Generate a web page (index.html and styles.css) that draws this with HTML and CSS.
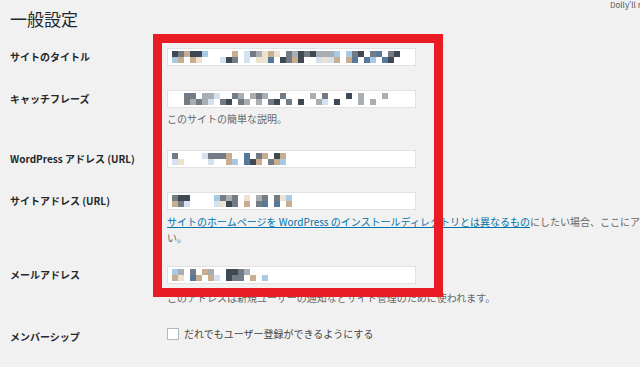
FILE: index.html
```html
<!DOCTYPE html>
<html lang="ja">
<head>
    <meta charset="UTF-8">
    <meta name="viewport" content="width=device-width, initial-scale=1.0">
    <title>一般設定</title>
    <link rel="stylesheet" href="styles.css">
</head>
<body>
    <p class="dolly">Dolly'll never go away again</p>

    <div class="wrap">
        <h1>一般設定</h1>

        <div class="form">
            <div class="row">
                <div class="label">サイトのタイトル</div>
                <div class="field">
                    <div class="input"><div class="mosaic" data-top="kdtkkb....t.ldgctc.dgkdkgggb.bdk.ds.dk" data-bot="bt.tc...lkd.l.ccs.kdtk..lclt.ts.sb.sk"></div></div>
                </div>
            </div>

            <div class="row">
                <div class="label">キャッチフレーズ</div>
                <div class="field">
                    <div class="input"><div class="mosaic shift" data-top=".dd.ggl..dg.gdg..d....g.d...k.g...g" data-bot=".dgdgl.dk.dg.g.dk.d.k..gl.k...g.g.."></div></div>
                    <p class="desc">このサイトの簡単な説明。</p>
                </div>
            </div>

            <div class="row">
                <div class="label">WordPress アドレス (URL)</div>
                <div class="field">
                    <div class="input"><div class="mosaic" data-top="d....ldddt..s.dt.kt" data-bot="lc....l..tb.skt.dtb"></div></div>
                </div>
            </div>

            <div class="row row-long">
                <div class="label">サイトアドレス (URL)</div>
                <div class="field">
                    <div class="input"><div class="mosaic" data-top="dkk....bdgd.c.gd.dcb" data-bot="tdl....lckd.t.ds.s.t"></div></div>
                    <p class="desc nowrap"><a href="#">サイトのホームページを WordPress のインストールディレクトリとは異なるもの</a>にしたい場合、ここにアドレスを入力してくださ<br>い。</p>
                </div>
            </div>

            <div class="row row-mail">
                <div class="label">メールアドレス</div>
                <div class="field">
                    <div class="input"><div class="mosaic" data-top="bg.d.tg..kkdg..." data-bot="tc.st.tl.kdd.t.b"></div></div>
                    <p class="desc">このアドレスは新規ユーザーの通知などサイト管理のために使われます。</p>
                </div>
            </div>

            <div class="row">
                <div class="label">メンバーシップ</div>
                <div class="field">
                    <label class="check"><span class="box"></span>だれでもユーザー登録ができるようにする</label>
                </div>
            </div>
        </div>
    </div>

    <div class="highlight"></div>

    <script>
        // build the blurred mosaic blocks inside the inputs
        document.querySelectorAll(".mosaic").forEach(el => {
            const top = el.dataset.top;
            const bot = el.dataset.bot;
            const len = Math.max(top.length, bot.length);
            for (let i = 0; i < len; i++) {
                [top[i] || ".", bot[i] || "."].forEach(ch => {
                    const cell = document.createElement("span");
                    cell.className = "m-" + (ch === "." ? "x" : ch);
                    el.appendChild(cell);
                });
            }
        });
    </script>
</body>
</html>
```

FILE: styles.css
```css
body {
    margin: 0;
    background: #f1f1f1;
    color: #23282d;
    font-family: "Noto Sans CJK JP", "Noto Sans", sans-serif;
    overflow: hidden;
    height: 367px;
}
.wrap {
    padding: 0 10px;
}
h1 {
    font-size: 17px;
    font-weight: 400;
    line-height: 22px;
    margin: 8px 0 6px;
}
.dolly {
    position: absolute;
    top: 0;
    left: 610px;
    margin: 0;
    font-size: 8px;
    line-height: 10px;
    color: #555;
    white-space: nowrap;
}
.row {
    display: grid;
    grid-template-columns: 157px 1fr;
    padding: 12px 0;
}
.row-long {
    padding-bottom: 8px;
}
.row-mail {
    padding-bottom: 11px;
}
.label {
    font-size: 10px;
    font-weight: 700;
    line-height: 18px;
    white-space: nowrap;
}
.field {
    min-width: 0;
}
.input {
    width: 249px;
    height: 18px;
    box-sizing: border-box;
    background: #fff;
    border: 1px solid #e2e2e2;
    padding: 2px 4px;
    display: flex;
    align-items: center;
}
.mosaic {
    display: grid;
    grid-auto-flow: column;
    grid-template-rows: 6px 6px;
    grid-auto-columns: 6px;
}
.mosaic.shift {
    margin-left: 6px;
}
.m-x { background: transparent; }
.m-k { background: #3e4953; }
.m-d { background: #737b84; }
.m-g { background: #a9aeb3; }
.m-l { background: #d3e2ee; }
.m-b { background: #a7c9e4; }
.m-s { background: #56799a; }
.m-t { background: #c8ad90; }
.m-c { background: #ece2cf; }
.desc {
    margin: 4px 0 0;
    font-size: 10px;
    line-height: 14px;
    color: #666;
}
.row-long .desc {
    margin-top: 4px;
    line-height: 16px;
}
.row-mail .desc {
    margin-top: 7px;
}
.nowrap {
    white-space: nowrap;
}
.desc a {
    color: #0073aa;
    text-decoration: underline;
}
.check {
    display: flex;
    align-items: center;
    font-size: 10px;
    line-height: 12px;
    color: #444;
}
.box {
    width: 12px;
    height: 12px;
    box-sizing: border-box;
    background: #fff;
    border: 1px solid #b4b9be;
    margin-right: 5px;
}
.highlight {
    position: absolute;
    left: 153px;
    top: 34px;
    width: 290px;
    height: 263px;
    box-sizing: border-box;
    border: 9px solid #e91c25;
}
```
